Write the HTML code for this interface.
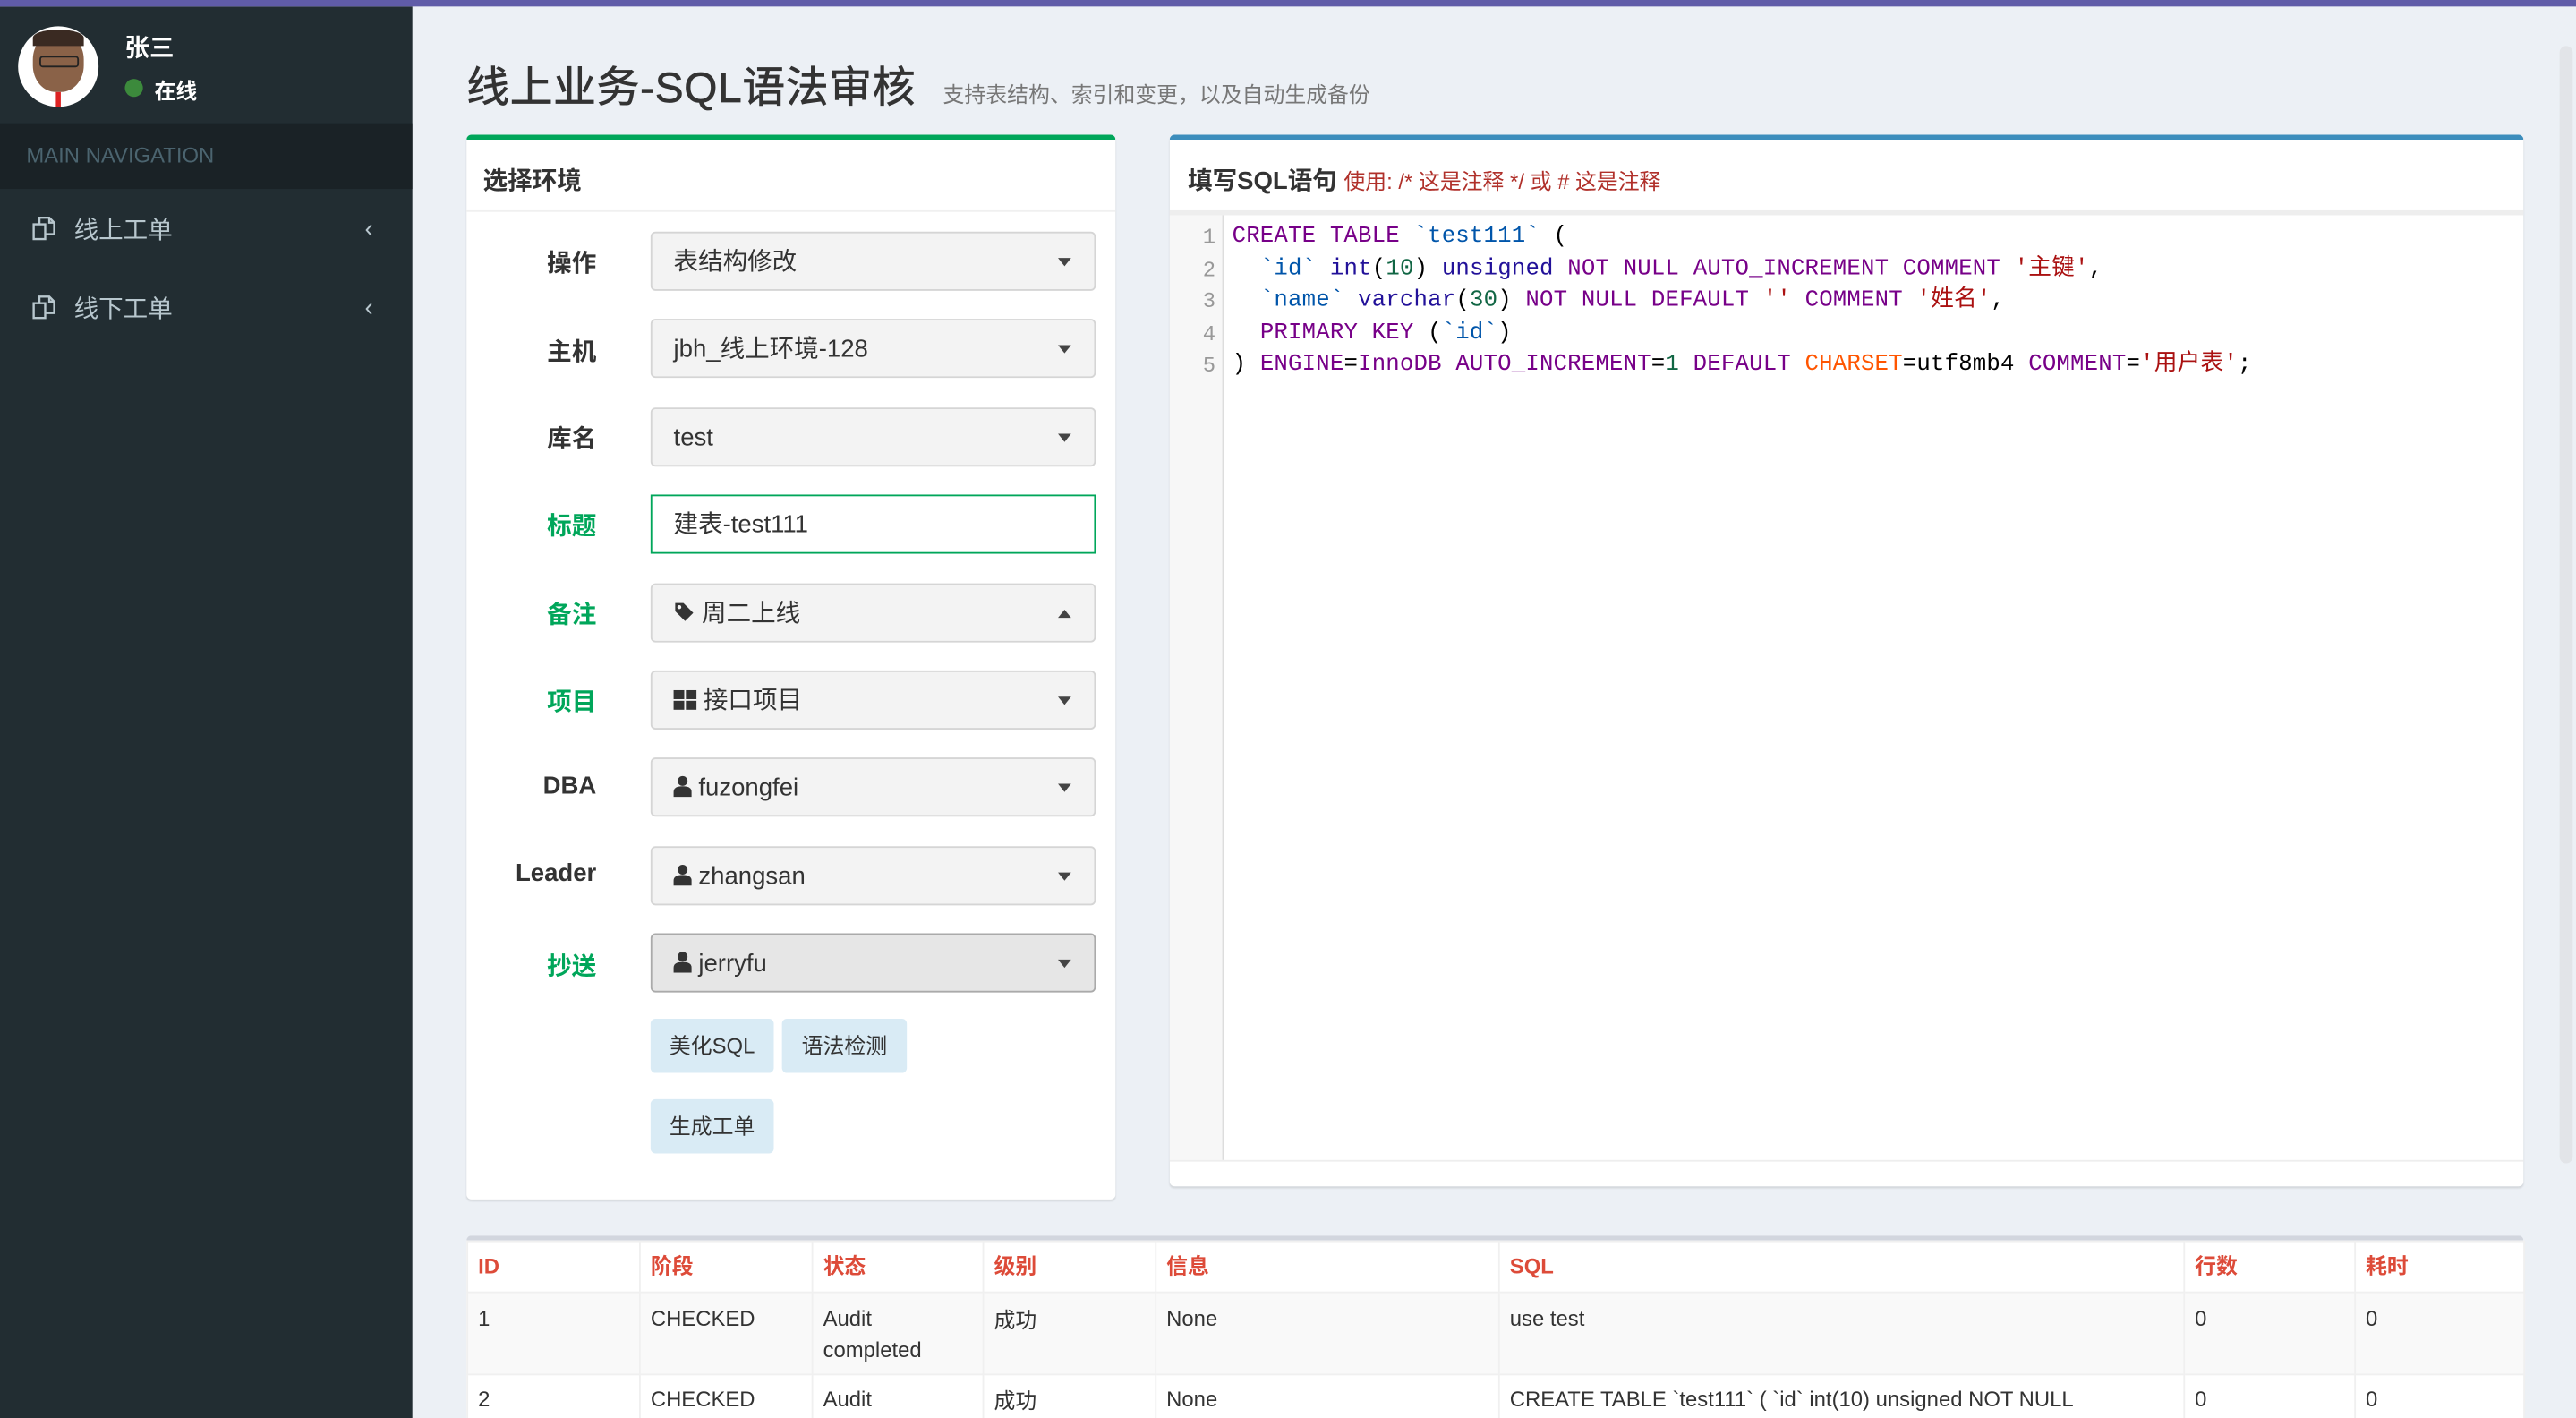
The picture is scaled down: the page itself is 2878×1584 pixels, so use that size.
<!DOCTYPE html>
<html><head><meta charset="utf-8"><style>
html,body{margin:0;padding:0;width:2878px;height:1584px;overflow:hidden;background:#ecf0f5}
#w{width:1568px;height:863px;transform:scale(1.83546);transform-origin:0 0;position:relative;font-family:"Liberation Sans","Noto Sans CJK SC",sans-serif;color:#333;background:#ecf0f5;overflow:hidden}
.a{position:absolute}
#top{left:0;top:0;width:1568px;height:4px;background:#605ca8}
#side{left:0;top:4px;width:251px;height:859px;background:#222d32}
.nav{color:#b8c7ce;font-size:15px}
.lbl{position:absolute;width:80px;text-align:right;left:283px;font-size:15px;font-weight:bold;color:#333}
.g{color:#00a65a}
.sel{position:absolute;left:396px;width:271px;height:36px;background:#f3f3f3;border:1px solid #d5d5d5;border-radius:3px;font-size:15px;line-height:35px;box-sizing:border-box;padding-left:13px}
.sel:after{content:"";position:absolute;right:14px;top:15px;border-left:4px solid transparent;border-right:4px solid transparent;border-top:5px solid #444}
.sel.up:after{border-top:0;border-bottom:5px solid #444}
.sel.no:after{display:none}
.btn{position:absolute;height:33px;line-height:33px;background:#d9ebf5;border-radius:3px;font-size:13px;text-align:center;color:#333}
pre{margin:0;font-family:"Liberation Mono","Noto Sans CJK SC",monospace;font-size:14px;letter-spacing:0.1px;line-height:19.6px}
.k{color:#770088}.v{color:#0055aa}.n{color:#116644}.s{color:#aa1111}.t{color:#221199}.o{color:#ff5500}
table{border-collapse:collapse;font-size:13px}
td,th{border:1px solid #f0f0f0;text-align:left;vertical-align:top;padding:0 6px}
th{color:#dd4b39;height:30px;line-height:30px}
.ic{display:inline-block;vertical-align:-2px;margin-right:10px}
</style></head><body><div id="w">
<div class="a" id="side"></div>
<div class="a" id="top"></div>
<div class="a" style="left:11px;top:16px;width:49px;height:49px;border-radius:50%;background:#fff;overflow:hidden"><div style="position:absolute;left:9px;top:4px;width:31px;height:36px;border-radius:45%;background:#8a6248"></div><div style="position:absolute;left:9px;top:2px;width:31px;height:10px;border-radius:50% 50% 0 0;background:#3a2a22"></div><div style="position:absolute;left:13px;top:18px;width:22px;height:5px;border:1px solid #222;border-radius:2px"></div><div style="position:absolute;left:23px;top:40px;width:3px;height:9px;background:#d22"></div></div>
<div class="a" style="left:76px;top:18px;color:#fff;font-weight:bold;font-size:15px">张三</div>
<div class="a" style="left:76px;top:48px;width:11px;height:11px;border-radius:50%;background:#3c8a3c"></div>
<div class="a" style="left:94px;top:45px;color:#fff;font-size:13px;font-weight:bold">在线</div>
<div class="a" style="left:0;top:75px;width:251px;height:40px;background:#1a2226"></div>
<div class="a" style="left:16px;top:87px;color:#4b646f;font-size:13px">MAIN NAVIGATION</div>
<div class="a nav" style="left:19px;top:129px"><svg class="ic" width="16" height="17" viewBox="0 0 16 17"><path d="M1.5 6.5h7v9h-7zM5 6.5V2.5h6l3 3v7h-5.5M11 2.5v3h3" fill="none" stroke="#b8c7ce" stroke-width="1.3"/></svg>线上工单</div>
<div class="a nav" style="left:222px;top:131px">‹</div>
<div class="a nav" style="left:19px;top:177px"><svg class="ic" width="16" height="17" viewBox="0 0 16 17"><path d="M1.5 6.5h7v9h-7zM5 6.5V2.5h6l3 3v7h-5.5M11 2.5v3h3" fill="none" stroke="#b8c7ce" stroke-width="1.3"/></svg>线下工单</div>
<div class="a nav" style="left:222px;top:179px">‹</div>
<div class="a" style="left:1558px;top:28px;width:8px;height:680px;background:#e2e4e8;border-radius:4px"></div>

<div class="a" style="left:284px;top:33px;font-size:26px;color:#333;letter-spacing:0.4px;-webkit-text-stroke:0.4px #333">线上业务-SQL语法审核</div>
<div class="a" style="left:574px;top:47px;font-size:13px;color:#777">支持表结构、索引和变更，以及自动生成备份</div>

<div class="a" style="left:284px;top:82px;width:395px;height:648px;background:#fff;border-top:3px solid #00a65a;border-radius:3px;box-sizing:border-box;box-shadow:0 1px 1px rgba(0,0,0,.1)"></div>
<div class="a" style="left:284px;top:128px;width:395px;height:1px;background:#f0f0f0"></div>
<div class="a" style="left:294px;top:99px;font-size:15px;font-weight:bold">选择环境</div>
<div class="lbl" style="top:149px">操作</div><div class="sel" style="top:141px">表结构修改</div>
<div class="lbl" style="top:203px">主机</div><div class="sel" style="top:194px">jbh_线上环境-128</div>
<div class="lbl" style="top:256px">库名</div><div class="sel" style="top:248px">test</div>
<div class="lbl g" style="top:309px">标题</div><div class="sel no" style="top:301px;background:#fff;border-color:#00a65a;border-radius:0">建表-test111</div>
<div class="lbl g" style="top:363px">备注</div><div class="sel up" style="top:355px"><svg width="13" height="13" viewBox="0 0 13 13" style="vertical-align:-1px"><path d="M1 1h5l6 6-5 5-6-6z" fill="#333"/><circle cx="3.5" cy="3.5" r="1.2" fill="#f3f3f3"/></svg> 周二上线</div>
<div class="lbl g" style="top:416px">项目</div><div class="sel" style="top:408px"><svg width="14" height="12" viewBox="0 0 14 12" style="vertical-align:-1px"><rect x="0" y="0" width="6.5" height="5.5" fill="#333"/><rect x="7.5" y="0" width="6.5" height="5.5" fill="#333"/><rect x="0" y="6.5" width="6.5" height="5.5" fill="#333"/><rect x="7.5" y="6.5" width="6.5" height="5.5" fill="#333"/></svg> 接口项目</div>
<div class="lbl" style="top:470px">DBA</div><div class="sel" style="top:461px"><svg width="11" height="13" viewBox="0 0 11 13" style="vertical-align:-1px"><circle cx="5.5" cy="3.3" r="3" fill="#333"/><path d="M0 13v-3q0-3.5 5.5-3.5t5.5 3.5v3z" fill="#333"/></svg> fuzongfei</div>
<div class="lbl" style="top:523px">Leader</div><div class="sel" style="top:515px"><svg width="11" height="13" viewBox="0 0 11 13" style="vertical-align:-1px"><circle cx="5.5" cy="3.3" r="3" fill="#333"/><path d="M0 13v-3q0-3.5 5.5-3.5t5.5 3.5v3z" fill="#333"/></svg> zhangsan</div>
<div class="lbl g" style="top:577px">抄送</div><div class="sel" style="top:568px;background:#e6e6e6;border-color:#aaa"><svg width="11" height="13" viewBox="0 0 11 13" style="vertical-align:-1px"><circle cx="5.5" cy="3.3" r="3" fill="#333"/><path d="M0 13v-3q0-3.5 5.5-3.5t5.5 3.5v3z" fill="#333"/></svg> jerryfu</div>
<div class="btn" style="left:396px;top:620px;width:75px">美化SQL</div>
<div class="btn" style="left:476px;top:620px;width:76px">语法检测</div>
<div class="btn" style="left:396px;top:669px;width:75px">生成工单</div>

<div class="a" style="left:712px;top:82px;width:824px;height:640px;background:#fff;border-top:3px solid #3c8dbc;border-radius:3px;box-sizing:border-box;box-shadow:0 1px 1px rgba(0,0,0,.1)"></div>
<div class="a" style="left:723px;top:99px;font-size:15px;font-weight:bold">填写SQL语句 <span style="font-weight:normal;font-size:13px;color:#b0302a">使用: /* 这是注释 */ 或 # 这是注释</span></div>
<div class="a" style="left:712px;top:128px;width:824px;height:3px;background:#eee"></div>
<div class="a" style="left:712px;top:131px;width:32px;height:575px;background:#f7f7f7;border-right:1px solid #ddd"></div>
<div class="a" style="left:712px;top:706px;width:824px;height:1px;background:#eee"></div>
<pre class="a" style="left:716px;top:135px;color:#999;text-align:right;width:24px;font-size:13px">1
2
3
4
5</pre>
<pre class="a" style="left:750px;top:135px;color:#000"><span class="k">CREATE TABLE</span> <span class="v">`test111`</span> (
  <span class="v">`id`</span> <span class="t">int</span>(<span class="n">10</span>) <span class="t">unsigned</span> <span class="k">NOT NULL AUTO_INCREMENT COMMENT</span> <span class="s">'主键'</span>,
  <span class="v">`name`</span> <span class="t">varchar</span>(<span class="n">30</span>) <span class="k">NOT NULL DEFAULT</span> <span class="s">''</span> <span class="k">COMMENT</span> <span class="s">'姓名'</span>,
  <span class="k">PRIMARY KEY</span> (<span class="v">`id`</span>)
) <span class="k">ENGINE</span>=<span class="k">InnoDB AUTO_INCREMENT</span>=<span class="n">1</span> <span class="k">DEFAULT</span> <span class="o">CHARSET</span>=utf8mb4 <span class="k">COMMENT</span>=<span class="s">'用户表'</span>;</pre>

<div class="a" style="left:284px;top:752px;width:1252px;height:120px;background:#fff;border-top:3px solid #d2d6de;border-radius:3px"></div>
<table class="a" style="left:284px;top:755px;width:1252px;table-layout:fixed">
<colgroup><col style="width:105px"><col style="width:105px"><col style="width:104px"><col style="width:105px"><col style="width:209px"><col style="width:417px"><col style="width:104px"><col style="width:103px"></colgroup>
<tr><th>ID</th><th>阶段</th><th>状态</th><th>级别</th><th>信息</th><th>SQL</th><th>行数</th><th>耗时</th></tr>
<tr style="background:#f9f9f9;height:50px"><td style="padding-top:8px">1</td><td style="padding-top:8px">CHECKED</td><td style="padding-top:8px;line-height:19px;padding-top:6px">Audit completed</td><td style="padding-top:6px">成功</td><td style="padding-top:8px">None</td><td style="padding-top:8px">use test</td><td style="padding-top:8px">0</td><td style="padding-top:8px">0</td></tr>
<tr style="height:40px"><td style="padding-top:7px">2</td><td style="padding-top:7px">CHECKED</td><td style="padding-top:7px">Audit</td><td style="padding-top:5px">成功</td><td style="padding-top:7px">None</td><td style="padding-top:7px;white-space:nowrap;overflow:hidden">CREATE TABLE `test111` ( `id` int(10) unsigned NOT NULL</td><td style="padding-top:7px">0</td><td style="padding-top:7px">0</td></tr>
</table>
</div></body></html>
